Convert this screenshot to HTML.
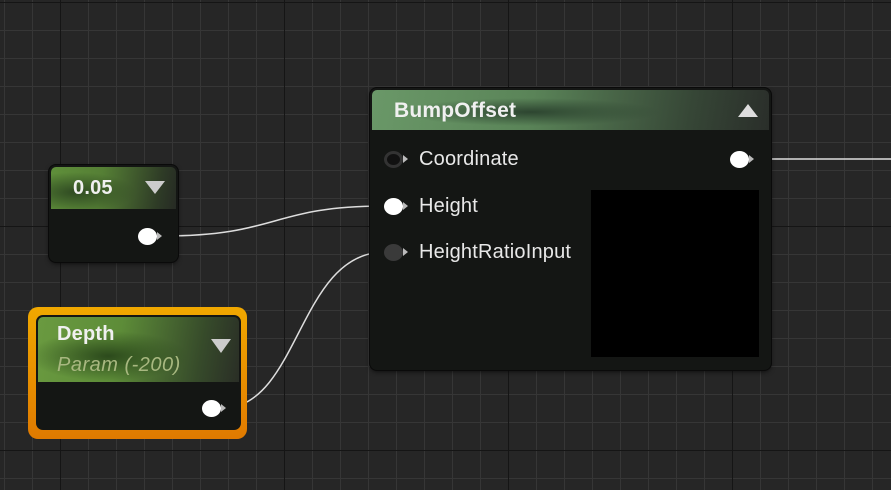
<!DOCTYPE html>
<html><head><style>
body{margin:0;width:891px;height:490px;overflow:hidden;position:relative;font-family:"Liberation Sans",sans-serif;
background-color:#262626;
background-image:
linear-gradient(to right,#151515 0,#151515 1px,transparent 1px),
linear-gradient(to bottom,#151515 0,#151515 1px,transparent 1px),
linear-gradient(to right,#363636 0,#363636 1px,transparent 1px),
linear-gradient(to bottom,#363636 0,#363636 1px,transparent 1px);
background-size:224px 224px,224px 224px,28px 28px,28px 28px;
background-position:60px 0,0 2px,4px 0,0 2px;}
.node{position:absolute;background:#141614;border-radius:7px;box-shadow:0 0 0 1px #0a0a0a,0 2px 5px rgba(0,0,0,.6);overflow:hidden}
.hdr{position:absolute;left:2px;right:2px;top:2px;border-radius:5px 5px 0 0;color:#f0f0f0;font-weight:bold;font-size:20px;letter-spacing:0.2px}
.pin{position:absolute;width:19px;height:17px;border-radius:50%;background:#fff}
.pin:after{content:"";position:absolute;left:19px;top:4px;border-left:5px solid #bbb;border-top:4px solid transparent;border-bottom:4px solid transparent}
.lbl{position:absolute;color:#e8e8e8;font-size:20px;letter-spacing:0.2px}
.tri{position:absolute;width:0;height:0;border-left:10px solid transparent;border-right:10px solid transparent}
</style></head><body>
<svg width="891" height="490" style="position:absolute;left:0;top:0">
<path d="M162 236 C 280 236, 270 206, 385 206" stroke="#ddd" stroke-width="1.5" fill="none"/>
<path d="M228 408 C 300 400, 300 252, 385 252" stroke="#ddd" stroke-width="1.5" fill="none"/>
<path d="M754 159 L 891 159" stroke="#ddd" stroke-width="1.5" fill="none"/>
</svg>

<div class="node" style="left:49px;top:165px;width:129px;height:97px">
 <div class="hdr" style="height:42px;background:radial-gradient(ellipse 60px 20px at 20% 60%,#2f4a22,transparent),linear-gradient(100deg,#5f8f3a 0%,#557f35 40%,#2e3b26 85%,#262a24 100%)">
  <span style="position:absolute;left:22px;top:10px">0.05</span>
  <div class="tri" style="left:94px;top:14px;border-top:13px solid #ccc"></div>
 </div>
 <div class="pin" style="left:89px;top:63px"></div>
</div>

<div style="position:absolute;left:28px;top:307px;width:219px;height:132px;border-radius:10px;background:linear-gradient(#f0a800,#e07a00)"></div>
<div class="node" style="left:36px;top:315px;width:205px;height:115px;box-shadow:none">
 <div class="hdr" style="height:65px;background:radial-gradient(ellipse 80px 25px at 35% 60%,#2c4a1c,transparent),linear-gradient(100deg,#6a9a40 0%,#5d8c38 40%,#364a2a 80%,#2a2e26 100%)">
  <span style="position:absolute;left:19px;top:6px">Depth</span>
  <span style="position:absolute;left:19px;top:37px;font-weight:normal;font-style:italic;color:#a8b880;font-size:20px;letter-spacing:0.5px">Param (-200)</span>
  <div class="tri" style="left:173px;top:22px;border-top:14px solid #ccc"></div>
 </div>
 <div class="pin" style="left:166px;top:85px"></div>
</div>

<div class="node" style="left:370px;top:88px;width:401px;height:282px">
 <div class="hdr" style="height:40px;background:radial-gradient(ellipse 130px 14px at 40% 55%,#2d4530,transparent),linear-gradient(100deg,#6a9868 0%,#5a8458 40%,#364636 80%,#2a2e2a 100%)">
  <span style="position:absolute;left:22px;top:9px;font-size:21px">BumpOffset</span>
  <div class="tri" style="left:366px;top:14px;border-bottom:13px solid #ddd"></div>
 </div>
 <div class="pin" style="left:14px;top:63px;background:#111;box-shadow:inset 0 0 0 3px #333"></div>
 <div class="lbl" style="left:49px;top:60px">Coordinate</div>
 <div class="pin" style="left:360px;top:63px"></div>
 <div class="pin" style="left:14px;top:110px"></div>
 <div class="lbl" style="left:49px;top:107px">Height</div>
 <div class="pin" style="left:14px;top:156px;background:#3a3a3a"></div>
 <div class="lbl" style="left:49px;top:153px">HeightRatioInput</div>
 <div style="position:absolute;left:221px;top:102px;width:168px;height:167px;background:#000"></div>
</div>
</body></html>
